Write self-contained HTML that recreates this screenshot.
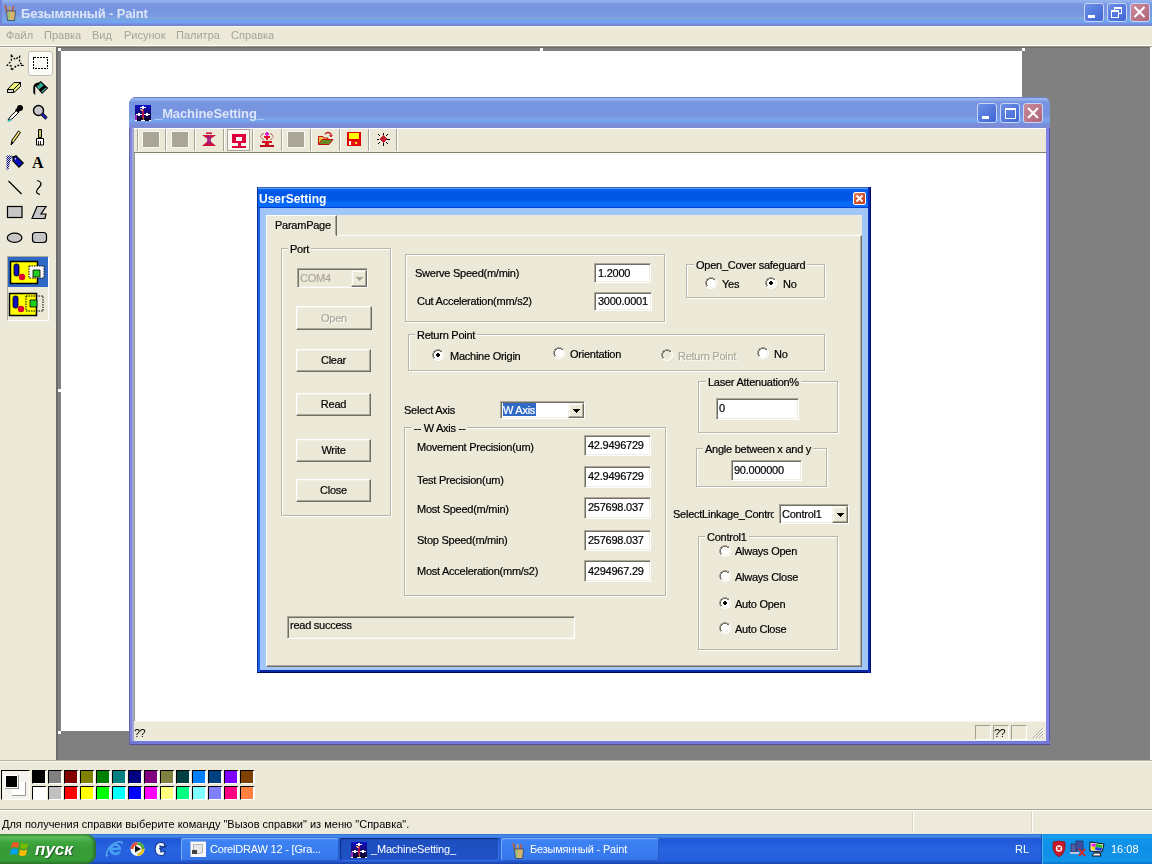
<!DOCTYPE html>
<html><head><meta charset="utf-8">
<style>
*{margin:0;padding:0;box-sizing:border-box}
html,body{width:1152px;height:864px;overflow:hidden;background:#ECE9D8;font-family:"Liberation Sans",sans-serif;font-size:11px;color:#000}
.a{position:absolute}
.t{position:absolute;white-space:pre;line-height:1}
/* paint */
#ptitle{left:0;top:0;width:1152px;height:26px;background:linear-gradient(#95B2EE 0,#90AEEC 2px,#7A97E1 4px,#7794E0 10px,#7B98E3 16px,#80A0E6 17px,#78A8D8 19px,#70A4F4 21px,#72A2F0 23px,#7888D8 24px,#7484D4 26px)}
.wb{position:absolute;width:21px;height:21px;border:1px solid #C9D6F6;border-radius:3px;background:linear-gradient(135deg,#6C8FE4,#3F66D6)}
.wbx{background:linear-gradient(135deg,#C98A9C,#B26478)}
#menu{left:0;top:26px;width:1152px;height:21px;background:#ECE9D8;border-top:1px solid #F2F4EC;border-bottom:1px solid #9A9888;box-shadow:inset 0 -1px 0 #fff}
.mi{color:#A7A49A;top:30px}
#tools{left:0;top:47px;width:56px;height:713px;background:#ECE9D8;border-top:1px solid #F8F8F0}
#gray{left:56px;top:47px;width:1094px;height:713px;background:#808080;border-left:2px solid #6A6E68;border-top:1px solid #6E6E66}
#canvas{left:61px;top:51px;width:961px;height:680px;background:#fff}
#rstrip{left:1150px;top:47px;width:2px;height:713px;background:#fff}
#palette{left:0;top:760px;width:1152px;height:50px;background:#ECE9D8;border-top:1px solid #B5B2A2;box-shadow:inset 0 1px 0 #FAF9F2}
#pstatus{left:0;top:809px;width:1152px;height:25px;background:#EDEADC;border-top:1px solid #ACA899;box-shadow:inset 0 1px 0 #fff}
#taskbar{left:0;top:834px;width:1152px;height:30px;background:linear-gradient(#3168D5 0,#4993E6 2px,#2157D7 5px,#2663E0 50%,#245DDB 90%,#1941A5 100%)}
.sw{width:15px;height:14px;border-left:1px solid #000;border-top:1px solid #000;border-right:2px solid #fff;border-bottom:1px solid #fff}
.spn{width:16px;height:15px;border-left:1px solid #A3A08F;border-top:1px solid #A3A08F;border-right:1px solid #fff;border-bottom:1px solid #fff}
.tbg{width:16px;height:15px;background:#A9A597;outline:1px solid #F8F7F2}
.tbtn{height:23px;border-radius:3px;background:linear-gradient(#5A92F2 0,#3C81F3 3px,#3A7DF0 50%,#3576EC 100%);box-shadow:inset 1px 1px 0 #78ACF8,inset -1px -1px 0 #2A5CC8}
.tbact{background:linear-gradient(#1A44B0,#1E4FC0 3px,#1E52C6);box-shadow:inset 1px 1px 1px #0F2F80,inset -1px -1px 0 #3870E0}
.tbt{color:#fff;letter-spacing:-0.2px}
.d{letter-spacing:-0.25px}
.hd{width:3px;height:3px;background:#fff}
.t{will-change:transform}
.d{-webkit-text-stroke-width:0.2px}
</style></head><body>

<!-- Paint title -->
<div id="ptitle" class="a"></div>

<svg class="a" style="left:2px;top:2px" width="17" height="19" viewBox="0 0 17 19" shape-rendering="auto">
 <path d="M3 3 L5 10" stroke="#B86040" stroke-width="1.6"/>
 <path d="M7.5 4 L8 10" stroke="#E0A050" stroke-width="1.6"/>
 <path d="M11.5 4 L10.5 10" stroke="#C86040" stroke-width="1.6"/>
 <path d="M4.5 9 L13.5 9 L12.5 18.5 L5.5 18.5 Z" fill="#C8C890" stroke="#404050" stroke-width="0.9" opacity="0.9"/>
 <path d="M5.5 10 L8 10 L8 17.5 L6.2 17.5 Z" fill="#90C070" opacity="0.8"/>
 <path d="M8 10 L12.5 10 L11.8 17.5 L8 17.5 Z" fill="#E0B060" opacity="0.8"/>
</svg>
<div class="a" style="left:0;top:0;width:2px;height:25px;background:#6F86D8"></div>
<div class="t" style="left:21px;top:7px;font-size:13px;font-weight:bold;color:#DCE6FA;letter-spacing:-0.15px">Безымянный - Paint</div>
<div class="wb" style="left:1084px;top:3px;width:20px;height:19px"></div>
<div class="wb" style="left:1107px;top:3px;width:20px;height:19px"></div>
<div class="wb wbx" style="left:1130px;top:3px;width:20px;height:19px"></div>
<svg class="a" style="left:1080px;top:0" width="72" height="25" shape-rendering="crispEdges">
 <rect x="8" y="15" width="7" height="3" fill="#fff"/>
 <path d="M34 7h7v6h-7z" fill="none" stroke="#fff" stroke-width="1"/><rect x="33.5" y="7" width="8" height="2" fill="#fff"/>
 <rect x="31" y="10.5" width="7.5" height="6.5" fill="#5577DD" stroke="#fff" stroke-width="1"/><rect x="30.5" y="10" width="8.5" height="2" fill="#fff"/>
 <path d="M54.5 7 L64.5 17 M64.5 7 L54.5 17" stroke="#fff" stroke-width="2" shape-rendering="auto"/>
</svg>


<div id="menu" class="a"></div>
<div class="t mi" style="left:6px">Файл</div>
<div class="t mi" style="left:44px">Правка</div>
<div class="t mi" style="left:92px">Вид</div>
<div class="t mi" style="left:124px">Рисунок</div>
<div class="t mi" style="left:176px">Палитра</div>
<div class="t mi" style="left:231px">Справка</div>

<div id="tools" class="a"></div>
<div id="gray" class="a"></div>
<div id="canvas" class="a"></div>
<div id="rstrip" class="a"></div>
<div class="a hd" style="left:58px;top:48px"></div>
<div class="a hd" style="left:540px;top:48px"></div>
<div class="a hd" style="left:1022px;top:48px"></div>
<div class="a hd" style="left:58px;top:389px"></div>
<div class="a hd" style="left:58px;top:731px"></div>


<!-- toolbox -->
<div class="a" style="left:28px;top:51px;width:25px;height:25px;background:#FBFBF8;border:1px solid #C1BFB2;border-radius:3px;box-shadow:inset 1px 1px 0 #fff"></div>
<svg class="a" style="left:0;top:47px" width="56" height="200" viewBox="0 47 56 200" shape-rendering="crispEdges"><defs><pattern id="chk" x="0" y="0" width="2" height="2" patternUnits="userSpaceOnUse"><rect width="1" height="1" fill="#000080"/><rect x="1" y="1" width="1" height="1" fill="#000080"/><rect x="1" y="0" width="1" height="1" fill="#C8D0F8"/></pattern></defs>
 <!-- free select star -->
 <g fill="none" stroke="#000" stroke-width="1" stroke-dasharray="2 1.5" shape-rendering="auto">
  <path d="M11.4 55.3 L15.2 59.4 L19.6 56.4 L19.5 62 L22.7 65.3 L16.6 65.5 L11.4 70.4 L11.4 66 L7.3 65.3 L11.4 60.5 Z" stroke-width="1.3"/>
 </g>
 <!-- rect select -->
 <rect x="33.5" y="57.5" width="14" height="11" fill="none" stroke="#000" stroke-dasharray="2 1"/>
 <!-- eraser -->
 <g shape-rendering="auto">
 <path d="M7.5 89.5 L14 82.5 L20.5 82.5 L20.5 86.5 L14 92.5 L7.5 92.5 Z" fill="#EEF078" stroke="#000"/>
 <path d="M7.5 89.5 L13.5 89.5 L13.5 92.5 L7.5 92.5 Z" fill="#D4D2CC" stroke="#000"/>
 <path d="M13.5 89.5 L20.5 82.5" stroke="#000" fill="none"/>
 <!-- fill bucket -->
 <path d="M40.7 81 L48.2 88 L42 94 L35 85.5 Z" fill="#000"/>
 <path d="M40.6 82.6 L43.8 85.6 L38.6 89.6 L36.6 85.6 Z" fill="#2EB09C"/>
 <path d="M46.6 88.3 L42 92.6 L41.2 91.8 L45.8 87.5 Z" fill="#48C8B0"/>
 <path d="M39 82.5 Q34.5 82.5 33.3 86.5 L33.3 93 L35.2 95 L35.2 87 Q36 85.2 39.5 85 Z" fill="#000"/>
 <!-- dropper -->
 <path d="M8 120 L10 117 L17 110 L19 112 L12 119 Z" fill="#fff" stroke="#000" stroke-width="1"/>
 <path d="M7 121 L10 119 L12 120 L9 122 Z" fill="#2FC4B8"/>
 <circle cx="20" cy="108" r="3" fill="#000"/>
 <path d="M15 110 L18 113 L20 111 L17 108 Z" fill="#000"/>
 <!-- magnifier -->
 <circle cx="38.5" cy="110.5" r="5" fill="#C8C8CC" stroke="#000" stroke-width="1.4"/>
 <path d="M42 114 L46.5 118.5" stroke="#000" stroke-width="3.2"/>
 <path d="M42 114 L46.5 118.5" stroke="#2020C0" stroke-width="1.8"/>
 <!-- pencil -->
 <path d="M11 145 L12 140 L18.5 131 L20.5 132.5 L14 141.5 Z" fill="#F0E070" stroke="#000"/>
 <path d="M11 145 L12 141.5 L13.5 142.5 Z" fill="#000"/>
 <!-- brush -->
 <path d="M38.5 129.5 h3 v8 h-3 z" fill="#C8C050" stroke="#000" stroke-width="1"/>
 <path d="M36.5 138.5 h7 v6.5 h-7 z" fill="#fff" stroke="#000" stroke-width="1"/>
 <path d="M38.5 141 v4 M40.5 141 v4" stroke="#000" stroke-width="0.9"/>
 <!-- airbrush -->
 <path d="M6.5 155.5 L12.5 155.5 L10 162 L8.5 169.5 L6.5 169.5 Z" fill="url(#chk)"/>
 <path d="M13 157.5 L16 155.8 L23.2 163 L19 167.2 L13 161 Z" fill="#0A10C0" stroke="#000" stroke-width="1.2"/>
 <path d="M14.6 158.6 L16.2 157.4 L15.2 160.2 Z" fill="#fff"/>
 <path d="M12 156.5 L14.5 157" stroke="#000" stroke-width="1"/>
 </g>
 <!-- A -->
 <text x="32" y="168" font-family="Liberation Serif" font-weight="bold" font-size="16" fill="#000">A</text>
 <g shape-rendering="auto">
 <!-- line -->
 <path d="M8.5 181 L21.5 194" stroke="#000" stroke-width="1.2"/>
 <!-- curve -->
 <path d="M37 180.5 C41 181 42.5 184 39 187.5 C35.5 190.5 35.5 193.5 40 194.5" fill="none" stroke="#000" stroke-width="1.2"/>
 <!-- rect -->
 <rect x="7.5" y="206.5" width="14.5" height="11" fill="#C6C6C6" stroke="#000" stroke-width="1.2"/>
 <!-- polygon -->
 <path d="M37 206.5 L46 206.5 L41 214 L46 214 L45 218.5 L32 218.5 Z" fill="#C6C6C6" stroke="#000" stroke-width="1.2"/>
 <!-- ellipse -->
 <ellipse cx="14.6" cy="237.8" rx="7.3" ry="4.6" fill="#C6C6C6" stroke="#000" stroke-width="1.2"/>
 <!-- rounded rect -->
 <rect x="32.5" y="232.5" width="14" height="10" rx="3" fill="#C6C6C6" stroke="#000" stroke-width="1.2"/>
 </g>
</svg>
<!-- options box -->
<div class="a" style="left:7px;top:256px;width:42px;height:65px;border:1px solid;border-color:#ACA899 #fff #fff #ACA899;background:#ECE9D8"></div>
<div class="a" style="left:8px;top:257px;width:40px;height:30px;background:#316AC5"></div>
<svg class="a" style="left:8px;top:257px" width="42" height="64" viewBox="0 0 42 64" shape-rendering="auto">
 <g transform="translate(2,4)">
  <rect x="0.5" y="0.5" width="27" height="22" fill="#FFFF00" stroke="#000" stroke-width="1.5"/>
  <rect x="19" y="5" width="15" height="12" fill="#fff" stroke="#000" stroke-dasharray="1.5 1"/>
  <rect x="4" y="3" width="5" height="12" rx="2" fill="#1010C0" stroke="#000" stroke-width="0.8"/>
  <circle cx="12" cy="16" r="3.2" fill="#E00030"/>
  <path d="M23 9 L30 9 L30 16 L23 16 Z" fill="#20D020" stroke="#000" stroke-width="0.8"/>
 </g>
 <g transform="translate(1,36)">
  <rect x="0.5" y="0.5" width="27" height="22" fill="#FFFF00" stroke="#000" stroke-width="1.5"/>
  <rect x="17" y="3" width="17" height="15" fill="none" stroke="#000" stroke-dasharray="1.5 1"/>
  <rect x="4" y="3" width="5" height="12" rx="2" fill="#1010C0" stroke="#000" stroke-width="0.8"/>
  <circle cx="12" cy="16" r="3.2" fill="#E00030"/>
  <path d="M21 7 L28 7 L28 14 L21 14 Z" fill="#20D020" stroke="#000" stroke-width="0.8"/>
 </g>
</svg>

<div id="palette" class="a"></div>

<!-- palette -->
<div class="a" style="left:1px;top:770px;width:29px;height:30px;background:#F4F3EC;border-left:1px solid #000;border-top:1px solid #000;border-right:1px solid #fff;border-bottom:1px solid #fff"></div>
<div class="a" style="left:12px;top:782px;width:14px;height:14px;background:#fff;border-right:1px solid #9A9890;border-bottom:1px solid #9A9890"></div>
<div class="a" style="left:5px;top:775px;width:14px;height:14px;background:#fff;border-right:1px solid #9A9890;border-bottom:1px solid #9A9890;padding:1px"><div style="width:11px;height:11px;background:#000"></div></div>
<div class="a sw" style="left:32px;top:770px;background:#000000"></div><div class="a sw" style="left:32px;top:786px;background:#FFFFFF"></div><div class="a sw" style="left:48px;top:770px;background:#808080"></div><div class="a sw" style="left:48px;top:786px;background:#C0C0C0"></div><div class="a sw" style="left:64px;top:770px;background:#800000"></div><div class="a sw" style="left:64px;top:786px;background:#FF0000"></div><div class="a sw" style="left:80px;top:770px;background:#808000"></div><div class="a sw" style="left:80px;top:786px;background:#FFFF00"></div><div class="a sw" style="left:96px;top:770px;background:#008000"></div><div class="a sw" style="left:96px;top:786px;background:#00FF00"></div><div class="a sw" style="left:112px;top:770px;background:#008080"></div><div class="a sw" style="left:112px;top:786px;background:#00FFFF"></div><div class="a sw" style="left:128px;top:770px;background:#000080"></div><div class="a sw" style="left:128px;top:786px;background:#0000FF"></div><div class="a sw" style="left:144px;top:770px;background:#800080"></div><div class="a sw" style="left:144px;top:786px;background:#FF00FF"></div><div class="a sw" style="left:160px;top:770px;background:#808040"></div><div class="a sw" style="left:160px;top:786px;background:#FFFF80"></div><div class="a sw" style="left:176px;top:770px;background:#004040"></div><div class="a sw" style="left:176px;top:786px;background:#00FF80"></div><div class="a sw" style="left:192px;top:770px;background:#0080FF"></div><div class="a sw" style="left:192px;top:786px;background:#80FFFF"></div><div class="a sw" style="left:208px;top:770px;background:#004080"></div><div class="a sw" style="left:208px;top:786px;background:#8080FF"></div><div class="a sw" style="left:224px;top:770px;background:#8000FF"></div><div class="a sw" style="left:224px;top:786px;background:#FF0080"></div><div class="a sw" style="left:240px;top:770px;background:#804000"></div><div class="a sw" style="left:240px;top:786px;background:#FF8040"></div>


<!-- MachineSetting window -->
<div class="a" style="left:129px;top:97px;width:921px;height:648px;background:#7478DA;border-radius:7px 7px 0 0"></div>
<div class="a" style="left:129px;top:97px;width:921px;height:31px;border-radius:7px 7px 0 0;background:linear-gradient(#6A80C8 0,#6A80C8 1px,#98B4EE 1px,#90ACEB 3px,#7794E0 5px,#7794E0 18px,#7A9CE4 21px,#78A8F0 23px,#74A0EC 25px,#7C8CD8 27px,#7C8CD8 31px)"></div>
<div class="a" style="left:129px;top:128px;width:5px;height:617px;background:linear-gradient(90deg,#5A68A8 0,#5A68A8 1px,#8286E0 1px,#8286E0 3px,#A0A8D0 3px)"></div>
<div class="a" style="left:1046px;top:128px;width:4px;height:617px;background:linear-gradient(90deg,#8282E8 0,#8282E8 3px,#5454A8 3px)"></div>
<div class="a" style="left:129px;top:741px;width:921px;height:4px;background:linear-gradient(#7478D8 0,#7478D8 3px,#50509A 3px)"></div><div class="a" style="left:129px;top:727px;width:1px;height:18px;background:#5A68A8"></div>
<svg class="a" style="left:135px;top:105px" width="16" height="16" viewBox="0 0 16 16" shape-rendering="crispEdges">
 <defs><linearGradient id="mg" x1="0" y1="0" x2="0" y2="1"><stop offset="0" stop-color="#1212C8"/><stop offset="0.55" stop-color="#140A70"/><stop offset="1" stop-color="#0A0020"/></linearGradient></defs>
 <rect width="16" height="16" fill="url(#mg)"/>
 <rect x="7" y="4" width="2" height="9" fill="#B01050"/>
 <rect x="8" y="12" width="1" height="3" fill="#C07020"/>
 <rect x="5" y="4" width="2" height="1" fill="#E0B060"/><rect x="6" y="5" width="2" height="1" fill="#E0C070"/>
 <rect x="0" y="10" width="2" height="5" fill="#A020C0"/>
 <path d="M5 2h6v1h-6zM7 1h2v3h-2z" fill="#fff"/>
 <path d="M1 9h6v1h-6zM3 8h2v3h-2z" fill="#fff"/>
 <path d="M9 9h6v1h-6zM11 8h2v3h-2z" fill="#fff"/>
 <path d="M0 15h2v1h-2zM6 15h4v1h-4zM14 15h2v1h-2z" fill="#fff"/>
</svg>
<div class="t" style="left:155px;top:107px;font-size:13px;font-weight:bold;color:#DCE6FA;letter-spacing:-0.1px">_MachineSetting_</div>
<div class="wb" style="left:977px;top:103px;width:20px;height:20px"></div>
<div class="wb" style="left:1000px;top:103px;width:20px;height:20px"></div>
<div class="wb wbx" style="left:1023px;top:103px;width:20px;height:20px"></div>
<svg class="a" style="left:975px;top:100px" width="70" height="26" shape-rendering="crispEdges">
 <rect x="7" y="16" width="7" height="3" fill="#fff"/>
 <rect x="30.5" y="8.5" width="10" height="10" fill="none" stroke="#fff" stroke-width="1"/><rect x="30" y="8" width="11" height="2" fill="#fff"/>
 <path d="M53 8 L63 18 M63 8 L53 18" stroke="#fff" stroke-width="2" shape-rendering="auto"/>
</svg>

<!-- toolbar -->
<div class="a" style="left:134px;top:128px;width:912px;height:25px;background:#ECE9D8;border-top:1px solid #fff;border-bottom:1px solid #85826F"></div>
<div class="a" style="left:134px;top:153px;width:912px;height:568px;background:#fff;border-left:1px solid #9D9A8A"></div>

<!-- toolbar buttons -->
<div class="a" style="left:137px;top:129px;width:2px;height:22px;border-left:1px solid #A7A594;border-right:1px solid #fff"></div><div class="a" style="left:165px;top:129px;width:2px;height:22px;border-left:1px solid #A7A594;border-right:1px solid #fff"></div><div class="a" style="left:194px;top:129px;width:2px;height:22px;border-left:1px solid #A7A594;border-right:1px solid #fff"></div><div class="a" style="left:223px;top:129px;width:2px;height:22px;border-left:1px solid #A7A594;border-right:1px solid #fff"></div><div class="a" style="left:252px;top:129px;width:2px;height:22px;border-left:1px solid #A7A594;border-right:1px solid #fff"></div><div class="a" style="left:281px;top:129px;width:2px;height:22px;border-left:1px solid #A7A594;border-right:1px solid #fff"></div><div class="a" style="left:310px;top:129px;width:2px;height:22px;border-left:1px solid #A7A594;border-right:1px solid #fff"></div><div class="a" style="left:339px;top:129px;width:2px;height:22px;border-left:1px solid #A7A594;border-right:1px solid #fff"></div><div class="a" style="left:368px;top:129px;width:2px;height:22px;border-left:1px solid #A7A594;border-right:1px solid #fff"></div><div class="a" style="left:396px;top:129px;width:2px;height:22px;border-left:1px solid #A7A594;border-right:1px solid #fff"></div>
<div class="a" style="left:227px;top:129px;width:23px;height:22px;background:#F7F6F1;border:1px solid #A9A697"></div>
<div class="a tbg" style="left:143px;top:132px"></div>
<div class="a tbg" style="left:172px;top:132px"></div>
<div class="a tbg" style="left:288px;top:132px"></div>
<svg class="a" style="left:0;top:0" width="400" height="160" viewBox="0 0 400 160">
 <!-- bowtie -->
 <g shape-rendering="auto">
 <rect x="206" y="132.5" width="6" height="1.5" fill="#C0103A"/>
 <path d="M202 135 L216 135 L209 140 Z" fill="#D0103A"/>
 <path d="M202 146 L216 146 L209 140 Z" fill="#D0103A"/>
 <path d="M207 136 L211 136 L211 144 L207 144 Z" fill="#9A2080" opacity="0.8"/>
 </g>
 <g shape-rendering="crispEdges">
 <!-- monitor -->
 <path d="M232 134 H246 V143 H232 Z M236 137 V141 H242 V137 Z" fill="#E0003A" fill-rule="evenodd"/>
 <rect x="238" y="143" width="3" height="3" fill="#E0003A"/>
 <rect x="232" y="146" width="14" height="2" fill="#E0003A"/>
 <!-- person arrows -->
 <rect x="265" y="133" width="4" height="1.5" fill="#E020D8"/>
 <rect x="266" y="132" width="2" height="4" fill="#E020D8"/>
 <rect x="264" y="136" width="6" height="2" fill="#E0102A"/>
 <rect x="266" y="136" width="2" height="4" fill="#D8102A"/>
 <rect x="262" y="141" width="10" height="2" fill="#D01020"/>
 <rect x="265" y="141" width="4" height="5" fill="#E01020"/>
 <rect x="260" y="145" width="14" height="2" fill="#C00818"/>
 <path d="M263.5 133 L260.5 136.5 L264 140.5 M270.5 133 L273.5 136.5 L270 140.5" stroke="#901010" stroke-width="1" fill="none" stroke-dasharray="1 0.6" shape-rendering="auto"/>
 <!-- folder -->
 </g>
 <g shape-rendering="auto">
 <path d="M318.5 136.5 L323 136.5 L324 138 L328 138 L328 144.5 L318.5 144.5 Z" fill="#F0C040" stroke="#C01010"/>
 <path d="M318.5 144.5 L322 139.5 L333 139.5 L329 144.5 Z" fill="#6A8A20" stroke="#C01010"/>
 <path d="M325 134 Q328 131 331 134 L331 136" fill="none" stroke="#C01010" stroke-width="1.2"/>
 <path d="M329.5 135 L331 137 L332.5 135" fill="none" stroke="#C01010" stroke-width="1"/>
 </g>
 <g shape-rendering="crispEdges">
 <!-- floppy -->
 <rect x="347" y="132" width="14" height="14" fill="#E00000"/>
 <rect x="349" y="133" width="10" height="6" fill="#FFFF00"/>
 <rect x="349" y="141" width="10" height="4" fill="#F01010"/>
 <rect x="349" y="141" width="2" height="4" fill="#fff"/>
 <rect x="355" y="142" width="2" height="2" fill="#F0E040"/>
 <!-- star -->
 <path d="M383 135 L387 139 L383 143 L379 139 Z" fill="#C02030"/>
 <path d="M383 133 V135 M383 143 V146 M377 139 H379 M387 139 H390 M378 134 L380 136 M388 134 L386 136 M378 144 L380 142 M388 144 L386 142" stroke="#000" stroke-width="1"/>
 </g>
</svg>

<!-- status -->
<div class="a" style="left:134px;top:721px;width:912px;height:20px;background:#ECE9D8;border-top:1px solid #F6F5EE;border-bottom:1px solid #E8F0F8"></div>
<div class="t" style="left:134px;top:728px;letter-spacing:-0.5px">??</div>
<div class="a spn" style="left:975px;top:725px"></div>
<div class="a spn" style="left:993px;top:725px"></div>
<div class="t" style="left:994px;top:728px;letter-spacing:-0.5px">??</div>
<div class="a spn" style="left:1011px;top:725px"></div>
<svg class="a" style="left:1031px;top:726px" width="14" height="14" shape-rendering="crispEdges">
 <path d="M12 2 L2 12 M12 5 L5 12 M12 8 L8 12 M12 11 L11 12" stroke="#A8A594" stroke-width="1"/>
 <path d="M13 2 L3 12 M13 5 L6 12 M13 8 L9 12" stroke="#fff" stroke-width="1"/>
</svg>

<!--DLG-->
<div class="a" style="left:257px;top:187px;width:614px;height:486px;background:#0828A8"></div>
<div class="a" style="left:257px;top:187px;width:1px;height:486px;background:#0B2E9E"></div>
<div class="a" style="left:258px;top:187px;width:2px;height:485px;background:#1C5FE0"></div>
<div class="a" style="left:870px;top:187px;width:1px;height:486px;background:#000860"></div>
<div class="a" style="left:257px;top:672px;width:614px;height:1px;background:#000860"></div>
<div class="a" style="left:260px;top:208px;width:608px;height:462px;background:#A0C7F7"></div>
<div class="a" style="left:258px;top:187px;width:613px;height:21px;background:linear-gradient(#3A64B0 0,#3A64B0 1px,#5C9CF8 1px,#5C9CF8 2px,#0A62F0 2px,#0058E8 5px,#0058E6 13px,#0A6AF8 15px,#0A6AF8 20px,#0040D0 20px)"></div>
<div class="a" style="left:257px;top:187px;width:1px;height:21px;background:#0B2E9E"></div>
<div class="a" style="left:868px;top:187px;width:2px;height:486px;background:#0A30B8"></div>
<div class="a" style="left:870px;top:187px;width:1px;height:486px;background:#000860"></div>
<div class="t" style="left:259px;top:193px;font-size:12px;font-weight:bold;color:#fff">UserSetting</div>
<div class="a" style="left:853px;top:192px;width:13px;height:13px;border:1px solid #fff;border-radius:2px;background:linear-gradient(135deg,#E8906A,#D0502A 50%,#C0402A)"></div>
<svg class="a" style="left:855px;top:194px" width="9" height="9" shape-rendering="auto"><path d="M1.5 1.5 L7.5 7.5 M7.5 1.5 L1.5 7.5" stroke="#fff" stroke-width="2"/></svg>
<div class="a" style="left:266px;top:215px;width:596px;height:452px;background:#ECE9D8"></div>
<div class="a" style="left:266px;top:235px;width:596px;height:432px;border-top:1px solid #fff;border-left:1px solid #fff;border-right:1px solid #716F64;border-bottom:1px solid #716F64;box-shadow:inset -1px -1px 0 #ACA899"></div>
<div class="a" style="left:266px;top:215px;width:71px;height:21px;background:#ECE9D8;border-top:1px solid #fff;border-left:1px solid #fff;border-right:1px solid #716F64;box-shadow:inset -1px 0 0 #ACA899"></div>
<div class="a" style="left:267px;top:235px;width:69px;height:1px;background:#ECE9D8"></div>
<div class="t d" style="left:275px;top:220px;">ParamPage</div>
<div class="a" style="left:282px;top:249px;width:110px;height:268px;border:1px solid #fff"></div>
<div class="a" style="left:281px;top:248px;width:110px;height:268px;border:1px solid #B8B5A6"></div>
<div class="t d" style="left:288px;top:244px;padding:0 2px 0 2px;background:#ECE9D8;height:11px">Port</div>
<div class="a" style="left:297px;top:268px;width:71px;height:20px;background:#ECE9D8;border-top:1px solid #ACA899;border-left:1px solid #ACA899;border-right:1px solid #fff;border-bottom:1px solid #fff;box-shadow:inset 1px 1px 0 #716F64,inset -1px -1px 0 #F1EFE2"></div>
<div class="a" style="left:351px;top:270px;width:16px;height:17px;background:#ECE9D8;border-top:1px solid #F1EFE2;border-left:1px solid #F1EFE2;border-right:1px solid #716F64;border-bottom:1px solid #716F64;box-shadow:inset -1px -1px 0 #ACA899,inset 1px 1px 0 #fff"></div>
<svg class="a" style="left:356px;top:277px" width="7" height="4" shape-rendering="crispEdges"><path d="M0 0h7v1h-1v1h-1v1h-1v1h-1v-1h-1v-1h-1v-1h-1z" fill="#ACA899"/><path d="M1 1h7v1h-1v1h-1v1h-1" fill="#fff" opacity="0"/></svg>
<div class="t d" style="left:300px;top:273px;color:#ACA899">COM4</div>
<div class="a" style="left:296px;top:306px;width:76px;height:24px;background:#ECE9D8;border-top:1px solid #fff;border-left:1px solid #fff;border-right:1px solid #716F64;border-bottom:1px solid #716F64;box-shadow:inset -1px -1px 0 #ACA899,inset 1px 1px 0 #F1EFE2"></div>
<div class="t d" style="left:296px;width:76px;text-align:center;top:313px;color:#ACA899;text-shadow:1px 1px 0 #fff">Open</div>
<div class="a" style="left:296px;top:349px;width:75px;height:23px;background:#ECE9D8;border-top:1px solid #fff;border-left:1px solid #fff;border-right:1px solid #716F64;border-bottom:1px solid #716F64;box-shadow:inset -1px -1px 0 #ACA899,inset 1px 1px 0 #F1EFE2"></div>
<div class="t d" style="left:296px;width:75px;text-align:center;top:355px;">Clear</div>
<div class="a" style="left:296px;top:393px;width:75px;height:23px;background:#ECE9D8;border-top:1px solid #fff;border-left:1px solid #fff;border-right:1px solid #716F64;border-bottom:1px solid #716F64;box-shadow:inset -1px -1px 0 #ACA899,inset 1px 1px 0 #F1EFE2"></div>
<div class="t d" style="left:296px;width:75px;text-align:center;top:399px;">Read</div>
<div class="a" style="left:296px;top:439px;width:75px;height:23px;background:#ECE9D8;border-top:1px solid #fff;border-left:1px solid #fff;border-right:1px solid #716F64;border-bottom:1px solid #716F64;box-shadow:inset -1px -1px 0 #ACA899,inset 1px 1px 0 #F1EFE2"></div>
<div class="t d" style="left:296px;width:75px;text-align:center;top:445px;">Write</div>
<div class="a" style="left:296px;top:479px;width:75px;height:23px;background:#ECE9D8;border-top:1px solid #fff;border-left:1px solid #fff;border-right:1px solid #716F64;border-bottom:1px solid #716F64;box-shadow:inset -1px -1px 0 #ACA899,inset 1px 1px 0 #F1EFE2"></div>
<div class="t d" style="left:296px;width:75px;text-align:center;top:485px;">Close</div>
<div class="a" style="left:406px;top:255px;width:260px;height:68px;border:1px solid #fff"></div>
<div class="a" style="left:405px;top:254px;width:260px;height:68px;border:1px solid #B8B5A6"></div>
<div class="t d" style="left:415px;top:268px;">Swerve Speed(m/min)</div>
<div class="t d" style="left:417px;top:296px;">Cut Acceleration(mm/s2)</div>
<div class="a" style="left:594px;top:263px;width:57px;height:20px;background:#fff;border-top:1px solid #ACA899;border-left:1px solid #ACA899;border-right:1px solid #fff;border-bottom:1px solid #fff;box-shadow:inset 1px 1px 0 #716F64,inset -1px -1px 0 #F1EFE2"></div>
<div class="t d" style="left:598px;top:268px;color:#000">1.2000</div>
<div class="a" style="left:594px;top:292px;width:58px;height:19px;background:#fff;border-top:1px solid #ACA899;border-left:1px solid #ACA899;border-right:1px solid #fff;border-bottom:1px solid #fff;box-shadow:inset 1px 1px 0 #716F64,inset -1px -1px 0 #F1EFE2"></div>
<div class="t d" style="left:598px;top:296px;color:#000">3000.0001</div>
<div class="a" style="left:687px;top:265px;width:139px;height:34px;border:1px solid #fff"></div>
<div class="a" style="left:686px;top:264px;width:139px;height:34px;border:1px solid #B8B5A6"></div>
<div class="t d" style="left:694px;top:260px;padding:0 2px 0 2px;background:#ECE9D8;height:11px">Open_Cover safeguard</div>
<svg class="a" style="left:705px;top:277px" width="12" height="12" viewBox="0 0 12 12" shape-rendering="crispEdges"><path d="M4 0h4v1h2v1h1v2h1v4h-1v2h-1v1h-2v1h-4v-1h-2v-1h-1v-2h-1v-4h1v-2h1v-1h2z" fill="#fff"/><path d="M4 0h4v1h-4zM2 1h2v1h-2zM8 1h2v1h-2zM1 2h1v2h-1zM0 4h1v4h-1zM1 8h1v2h-1z" fill="#ACA899"/><path d="M4 1h4v1h-4zM2 2h2v1h-2zM8 2h2v1h-2zM2 3h1v1h-1zM1 4h1v4h-1zM2 8h1v1h-1z" fill="#716F64"/><path d="M10 2h1v2h-1zM11 4h1v4h-1zM10 8h1v2h-1zM8 10h2v1h-2zM2 10h2v1h-2zM4 11h4v1h-4z" fill="#fff"/><path d="M9 3h1v1h-1zM10 4h1v4h-1zM9 8h1v1h-1zM8 9h1v1h-1zM3 9h1v1h-1zM4 10h4v1h-4z" fill="#F1EFE2"/></svg>
<div class="t d" style="left:722px;top:279px;">Yes</div>
<svg class="a" style="left:765px;top:277px" width="12" height="12" viewBox="0 0 12 12" shape-rendering="crispEdges"><path d="M4 0h4v1h2v1h1v2h1v4h-1v2h-1v1h-2v1h-4v-1h-2v-1h-1v-2h-1v-4h1v-2h1v-1h2z" fill="#fff"/><path d="M4 0h4v1h-4zM2 1h2v1h-2zM8 1h2v1h-2zM1 2h1v2h-1zM0 4h1v4h-1zM1 8h1v2h-1z" fill="#ACA899"/><path d="M4 1h4v1h-4zM2 2h2v1h-2zM8 2h2v1h-2zM2 3h1v1h-1zM1 4h1v4h-1zM2 8h1v1h-1z" fill="#716F64"/><path d="M10 2h1v2h-1zM11 4h1v4h-1zM10 8h1v2h-1zM8 10h2v1h-2zM2 10h2v1h-2zM4 11h4v1h-4z" fill="#fff"/><path d="M9 3h1v1h-1zM10 4h1v4h-1zM9 8h1v1h-1zM8 9h1v1h-1zM3 9h1v1h-1zM4 10h4v1h-4z" fill="#F1EFE2"/><path d="M5 4h2v1h1v2h-1v1h-2v-1h-1v-2h1z" fill="#000"/></svg>
<div class="t d" style="left:783px;top:279px;">No</div>
<div class="a" style="left:409px;top:335px;width:417px;height:37px;border:1px solid #fff"></div>
<div class="a" style="left:408px;top:334px;width:417px;height:37px;border:1px solid #B8B5A6"></div>
<div class="t d" style="left:415px;top:330px;padding:0 2px 0 2px;background:#ECE9D8;height:11px">Return Point</div>
<svg class="a" style="left:432px;top:349px" width="12" height="12" viewBox="0 0 12 12" shape-rendering="crispEdges"><path d="M4 0h4v1h2v1h1v2h1v4h-1v2h-1v1h-2v1h-4v-1h-2v-1h-1v-2h-1v-4h1v-2h1v-1h2z" fill="#fff"/><path d="M4 0h4v1h-4zM2 1h2v1h-2zM8 1h2v1h-2zM1 2h1v2h-1zM0 4h1v4h-1zM1 8h1v2h-1z" fill="#ACA899"/><path d="M4 1h4v1h-4zM2 2h2v1h-2zM8 2h2v1h-2zM2 3h1v1h-1zM1 4h1v4h-1zM2 8h1v1h-1z" fill="#716F64"/><path d="M10 2h1v2h-1zM11 4h1v4h-1zM10 8h1v2h-1zM8 10h2v1h-2zM2 10h2v1h-2zM4 11h4v1h-4z" fill="#fff"/><path d="M9 3h1v1h-1zM10 4h1v4h-1zM9 8h1v1h-1zM8 9h1v1h-1zM3 9h1v1h-1zM4 10h4v1h-4z" fill="#F1EFE2"/><path d="M5 4h2v1h1v2h-1v1h-2v-1h-1v-2h1z" fill="#000"/></svg>
<div class="t d" style="left:450px;top:351px;">Machine Origin</div>
<svg class="a" style="left:553px;top:347px" width="12" height="12" viewBox="0 0 12 12" shape-rendering="crispEdges"><path d="M4 0h4v1h2v1h1v2h1v4h-1v2h-1v1h-2v1h-4v-1h-2v-1h-1v-2h-1v-4h1v-2h1v-1h2z" fill="#fff"/><path d="M4 0h4v1h-4zM2 1h2v1h-2zM8 1h2v1h-2zM1 2h1v2h-1zM0 4h1v4h-1zM1 8h1v2h-1z" fill="#ACA899"/><path d="M4 1h4v1h-4zM2 2h2v1h-2zM8 2h2v1h-2zM2 3h1v1h-1zM1 4h1v4h-1zM2 8h1v1h-1z" fill="#716F64"/><path d="M10 2h1v2h-1zM11 4h1v4h-1zM10 8h1v2h-1zM8 10h2v1h-2zM2 10h2v1h-2zM4 11h4v1h-4z" fill="#fff"/><path d="M9 3h1v1h-1zM10 4h1v4h-1zM9 8h1v1h-1zM8 9h1v1h-1zM3 9h1v1h-1zM4 10h4v1h-4z" fill="#F1EFE2"/></svg>
<div class="t d" style="left:570px;top:349px;">Orientation</div>
<svg class="a" style="left:661px;top:349px" width="12" height="12" viewBox="0 0 12 12" shape-rendering="crispEdges"><path d="M4 0h4v1h2v1h1v2h1v4h-1v2h-1v1h-2v1h-4v-1h-2v-1h-1v-2h-1v-4h1v-2h1v-1h2z" fill="#ECE9D8"/><path d="M4 0h4v1h-4zM2 1h2v1h-2zM8 1h2v1h-2zM1 2h1v2h-1zM0 4h1v4h-1zM1 8h1v2h-1z" fill="#ACA899"/><path d="M4 1h4v1h-4zM2 2h2v1h-2zM8 2h2v1h-2zM2 3h1v1h-1zM1 4h1v4h-1zM2 8h1v1h-1z" fill="#716F64"/><path d="M10 2h1v2h-1zM11 4h1v4h-1zM10 8h1v2h-1zM8 10h2v1h-2zM2 10h2v1h-2zM4 11h4v1h-4z" fill="#fff"/><path d="M9 3h1v1h-1zM10 4h1v4h-1zM9 8h1v1h-1zM8 9h1v1h-1zM3 9h1v1h-1zM4 10h4v1h-4z" fill="#F1EFE2"/></svg>
<div class="t d" style="left:678px;top:351px;color:#ACA899;text-shadow:1px 1px 0 #fff">Return Point</div>
<svg class="a" style="left:757px;top:347px" width="12" height="12" viewBox="0 0 12 12" shape-rendering="crispEdges"><path d="M4 0h4v1h2v1h1v2h1v4h-1v2h-1v1h-2v1h-4v-1h-2v-1h-1v-2h-1v-4h1v-2h1v-1h2z" fill="#fff"/><path d="M4 0h4v1h-4zM2 1h2v1h-2zM8 1h2v1h-2zM1 2h1v2h-1zM0 4h1v4h-1zM1 8h1v2h-1z" fill="#ACA899"/><path d="M4 1h4v1h-4zM2 2h2v1h-2zM8 2h2v1h-2zM2 3h1v1h-1zM1 4h1v4h-1zM2 8h1v1h-1z" fill="#716F64"/><path d="M10 2h1v2h-1zM11 4h1v4h-1zM10 8h1v2h-1zM8 10h2v1h-2zM2 10h2v1h-2zM4 11h4v1h-4z" fill="#fff"/><path d="M9 3h1v1h-1zM10 4h1v4h-1zM9 8h1v1h-1zM8 9h1v1h-1zM3 9h1v1h-1zM4 10h4v1h-4z" fill="#F1EFE2"/></svg>
<div class="t d" style="left:774px;top:349px;">No</div>
<div class="a" style="left:699px;top:382px;width:140px;height:52px;border:1px solid #fff"></div>
<div class="a" style="left:698px;top:381px;width:140px;height:52px;border:1px solid #B8B5A6"></div>
<div class="t d" style="left:706px;top:377px;padding:0 2px 0 2px;background:#ECE9D8;height:11px">Laser Attenuation%</div>
<div class="a" style="left:716px;top:398px;width:83px;height:22px;background:#fff;border-top:1px solid #ACA899;border-left:1px solid #ACA899;border-right:1px solid #fff;border-bottom:1px solid #fff;box-shadow:inset 1px 1px 0 #716F64,inset -1px -1px 0 #F1EFE2"></div>
<div class="t d" style="left:719px;top:403px;color:#000">0</div>
<div class="a" style="left:697px;top:449px;width:131px;height:39px;border:1px solid #fff"></div>
<div class="a" style="left:696px;top:448px;width:131px;height:39px;border:1px solid #B8B5A6"></div>
<div class="t d" style="left:703px;top:444px;padding:0 2px 0 2px;background:#ECE9D8;height:11px">Angle between x and y</div>
<div class="a" style="left:731px;top:460px;width:71px;height:21px;background:#fff;border-top:1px solid #ACA899;border-left:1px solid #ACA899;border-right:1px solid #fff;border-bottom:1px solid #fff;box-shadow:inset 1px 1px 0 #716F64,inset -1px -1px 0 #F1EFE2"></div>
<div class="t d" style="left:734px;top:465px;color:#000">90.000000</div>
<div class="t d" style="left:404px;top:405px;">Select Axis</div>
<div class="a" style="left:500px;top:401px;width:85px;height:18px;background:#fff;border-top:1px solid #ACA899;border-left:1px solid #ACA899;border-right:1px solid #fff;border-bottom:1px solid #fff;box-shadow:inset 1px 1px 0 #716F64,inset -1px -1px 0 #F1EFE2"></div>
<div class="a" style="left:568px;top:403px;width:16px;height:15px;background:#ECE9D8;border-top:1px solid #F1EFE2;border-left:1px solid #F1EFE2;border-right:1px solid #716F64;border-bottom:1px solid #716F64;box-shadow:inset -1px -1px 0 #ACA899,inset 1px 1px 0 #fff"></div>
<svg class="a" style="left:573px;top:409px" width="7" height="4" shape-rendering="crispEdges"><path d="M0 0h7v1h-1v1h-1v1h-1v1h-1v-1h-1v-1h-1v-1h-1z" fill="#000"/></svg>
<div class="a" style="left:503px;top:403px;width:33px;height:13px;background:#316AC5"></div>
<div class="t d" style="left:503px;top:405px;color:#fff">W Axis</div>
<div class="a" style="left:405px;top:428px;width:262px;height:169px;border:1px solid #fff"></div>
<div class="a" style="left:404px;top:427px;width:262px;height:169px;border:1px solid #B8B5A6"></div>
<div class="t d" style="left:412px;top:423px;padding:0 2px 0 2px;background:#ECE9D8;height:11px">-- W Axis --</div>
<div class="t d" style="left:417px;top:442px;">Movement Precision(um)</div>
<div class="a" style="left:584px;top:435px;width:67px;height:21px;background:#fff;border-top:1px solid #ACA899;border-left:1px solid #ACA899;border-right:1px solid #fff;border-bottom:1px solid #fff;box-shadow:inset 1px 1px 0 #716F64,inset -1px -1px 0 #F1EFE2"></div>
<div class="t d" style="left:588px;top:440px;color:#000">42.9496729</div>
<div class="t d" style="left:417px;top:475px;">Test Precision(um)</div>
<div class="a" style="left:584px;top:466px;width:67px;height:22px;background:#fff;border-top:1px solid #ACA899;border-left:1px solid #ACA899;border-right:1px solid #fff;border-bottom:1px solid #fff;box-shadow:inset 1px 1px 0 #716F64,inset -1px -1px 0 #F1EFE2"></div>
<div class="t d" style="left:588px;top:471px;color:#000">42.9496729</div>
<div class="t d" style="left:417px;top:504px;">Most Speed(m/min)</div>
<div class="a" style="left:584px;top:497px;width:67px;height:22px;background:#fff;border-top:1px solid #ACA899;border-left:1px solid #ACA899;border-right:1px solid #fff;border-bottom:1px solid #fff;box-shadow:inset 1px 1px 0 #716F64,inset -1px -1px 0 #F1EFE2"></div>
<div class="t d" style="left:588px;top:502px;color:#000">257698.037</div>
<div class="t d" style="left:417px;top:535px;">Stop Speed(m/min)</div>
<div class="a" style="left:584px;top:530px;width:67px;height:21px;background:#fff;border-top:1px solid #ACA899;border-left:1px solid #ACA899;border-right:1px solid #fff;border-bottom:1px solid #fff;box-shadow:inset 1px 1px 0 #716F64,inset -1px -1px 0 #F1EFE2"></div>
<div class="t d" style="left:588px;top:535px;color:#000">257698.037</div>
<div class="t d" style="left:417px;top:566px;">Most Acceleration(mm/s2)</div>
<div class="a" style="left:584px;top:560px;width:67px;height:22px;background:#fff;border-top:1px solid #ACA899;border-left:1px solid #ACA899;border-right:1px solid #fff;border-bottom:1px solid #fff;box-shadow:inset 1px 1px 0 #716F64,inset -1px -1px 0 #F1EFE2"></div>
<div class="t d" style="left:588px;top:566px;color:#000">4294967.29</div>
<div class="t d" style="left:673px;top:509px;width:101px;overflow:hidden">SelectLinkage_Control</div>
<div class="a" style="left:779px;top:504px;width:70px;height:20px;background:#fff;border-top:1px solid #ACA899;border-left:1px solid #ACA899;border-right:1px solid #fff;border-bottom:1px solid #fff;box-shadow:inset 1px 1px 0 #716F64,inset -1px -1px 0 #F1EFE2"></div>
<div class="a" style="left:832px;top:506px;width:16px;height:17px;background:#ECE9D8;border-top:1px solid #F1EFE2;border-left:1px solid #F1EFE2;border-right:1px solid #716F64;border-bottom:1px solid #716F64;box-shadow:inset -1px -1px 0 #ACA899,inset 1px 1px 0 #fff"></div>
<svg class="a" style="left:837px;top:513px" width="7" height="4" shape-rendering="crispEdges"><path d="M0 0h7v1h-1v1h-1v1h-1v1h-1v-1h-1v-1h-1v-1h-1z" fill="#000"/></svg>
<div class="t d" style="left:782px;top:509px;">Control1</div>
<div class="a" style="left:699px;top:537px;width:140px;height:114px;border:1px solid #fff"></div>
<div class="a" style="left:698px;top:536px;width:140px;height:114px;border:1px solid #B8B5A6"></div>
<div class="t d" style="left:705px;top:532px;padding:0 2px 0 2px;background:#ECE9D8;height:11px">Control1</div>
<svg class="a" style="left:719px;top:545px" width="12" height="12" viewBox="0 0 12 12" shape-rendering="crispEdges"><path d="M4 0h4v1h2v1h1v2h1v4h-1v2h-1v1h-2v1h-4v-1h-2v-1h-1v-2h-1v-4h1v-2h1v-1h2z" fill="#fff"/><path d="M4 0h4v1h-4zM2 1h2v1h-2zM8 1h2v1h-2zM1 2h1v2h-1zM0 4h1v4h-1zM1 8h1v2h-1z" fill="#ACA899"/><path d="M4 1h4v1h-4zM2 2h2v1h-2zM8 2h2v1h-2zM2 3h1v1h-1zM1 4h1v4h-1zM2 8h1v1h-1z" fill="#716F64"/><path d="M10 2h1v2h-1zM11 4h1v4h-1zM10 8h1v2h-1zM8 10h2v1h-2zM2 10h2v1h-2zM4 11h4v1h-4z" fill="#fff"/><path d="M9 3h1v1h-1zM10 4h1v4h-1zM9 8h1v1h-1zM8 9h1v1h-1zM3 9h1v1h-1zM4 10h4v1h-4z" fill="#F1EFE2"/></svg>
<div class="t d" style="left:735px;top:546px;">Always Open</div>
<svg class="a" style="left:719px;top:570px" width="12" height="12" viewBox="0 0 12 12" shape-rendering="crispEdges"><path d="M4 0h4v1h2v1h1v2h1v4h-1v2h-1v1h-2v1h-4v-1h-2v-1h-1v-2h-1v-4h1v-2h1v-1h2z" fill="#fff"/><path d="M4 0h4v1h-4zM2 1h2v1h-2zM8 1h2v1h-2zM1 2h1v2h-1zM0 4h1v4h-1zM1 8h1v2h-1z" fill="#ACA899"/><path d="M4 1h4v1h-4zM2 2h2v1h-2zM8 2h2v1h-2zM2 3h1v1h-1zM1 4h1v4h-1zM2 8h1v1h-1z" fill="#716F64"/><path d="M10 2h1v2h-1zM11 4h1v4h-1zM10 8h1v2h-1zM8 10h2v1h-2zM2 10h2v1h-2zM4 11h4v1h-4z" fill="#fff"/><path d="M9 3h1v1h-1zM10 4h1v4h-1zM9 8h1v1h-1zM8 9h1v1h-1zM3 9h1v1h-1zM4 10h4v1h-4z" fill="#F1EFE2"/></svg>
<div class="t d" style="left:735px;top:572px;">Always Close</div>
<svg class="a" style="left:719px;top:597px" width="12" height="12" viewBox="0 0 12 12" shape-rendering="crispEdges"><path d="M4 0h4v1h2v1h1v2h1v4h-1v2h-1v1h-2v1h-4v-1h-2v-1h-1v-2h-1v-4h1v-2h1v-1h2z" fill="#fff"/><path d="M4 0h4v1h-4zM2 1h2v1h-2zM8 1h2v1h-2zM1 2h1v2h-1zM0 4h1v4h-1zM1 8h1v2h-1z" fill="#ACA899"/><path d="M4 1h4v1h-4zM2 2h2v1h-2zM8 2h2v1h-2zM2 3h1v1h-1zM1 4h1v4h-1zM2 8h1v1h-1z" fill="#716F64"/><path d="M10 2h1v2h-1zM11 4h1v4h-1zM10 8h1v2h-1zM8 10h2v1h-2zM2 10h2v1h-2zM4 11h4v1h-4z" fill="#fff"/><path d="M9 3h1v1h-1zM10 4h1v4h-1zM9 8h1v1h-1zM8 9h1v1h-1zM3 9h1v1h-1zM4 10h4v1h-4z" fill="#F1EFE2"/><path d="M5 4h2v1h1v2h-1v1h-2v-1h-1v-2h1z" fill="#000"/></svg>
<div class="t d" style="left:735px;top:599px;">Auto Open</div>
<svg class="a" style="left:719px;top:622px" width="12" height="12" viewBox="0 0 12 12" shape-rendering="crispEdges"><path d="M4 0h4v1h2v1h1v2h1v4h-1v2h-1v1h-2v1h-4v-1h-2v-1h-1v-2h-1v-4h1v-2h1v-1h2z" fill="#fff"/><path d="M4 0h4v1h-4zM2 1h2v1h-2zM8 1h2v1h-2zM1 2h1v2h-1zM0 4h1v4h-1zM1 8h1v2h-1z" fill="#ACA899"/><path d="M4 1h4v1h-4zM2 2h2v1h-2zM8 2h2v1h-2zM2 3h1v1h-1zM1 4h1v4h-1zM2 8h1v1h-1z" fill="#716F64"/><path d="M10 2h1v2h-1zM11 4h1v4h-1zM10 8h1v2h-1zM8 10h2v1h-2zM2 10h2v1h-2zM4 11h4v1h-4z" fill="#fff"/><path d="M9 3h1v1h-1zM10 4h1v4h-1zM9 8h1v1h-1zM8 9h1v1h-1zM3 9h1v1h-1zM4 10h4v1h-4z" fill="#F1EFE2"/></svg>
<div class="t d" style="left:735px;top:624px;">Auto Close</div>
<div class="a" style="left:287px;top:616px;width:288px;height:23px;background:#ECE9D8;border-top:1px solid #ACA899;border-left:1px solid #ACA899;border-right:1px solid #fff;border-bottom:1px solid #fff;box-shadow:inset 1px 1px 0 #716F64,inset -1px -1px 0 #F1EFE2"></div>
<div class="t d" style="left:290px;top:620px;color:#000">read success</div>
<!--/DLG-->
<div id="pstatus" class="a"></div>
<div class="t" style="left:2px;top:819px">Для получения справки выберите команду "Вызов справки" из меню "Справка".</div>
<div class="a" style="left:912px;top:812px;width:2px;height:21px;border-left:1px solid #D8D4C4;border-right:1px solid #fff"></div>
<div class="a" style="left:1031px;top:812px;width:2px;height:21px;border-left:1px solid #D8D4C4;border-right:1px solid #fff"></div>
<div id="taskbar" class="a"></div>

<!-- taskbar -->
<div class="a" style="left:0;top:834px;width:96px;height:30px;border-radius:0 10px 10px 0;background:linear-gradient(#3C9A3C 0,#5DBB5D 3px,#3FA73F 8px,#379A37 50%,#389F38 85%,#2C7F2C 100%);box-shadow:inset -2px 0 3px #2A6A2A"></div>
<svg class="a" style="left:10px;top:840px" width="20" height="18" viewBox="0 0 20 18" shape-rendering="auto">
 <path d="M2 3 Q5 1 9 3 L8 8 Q5 6 1 8 Z" fill="#F05A28"/>
 <path d="M11 3 Q14 5 18 3 L17 8 Q13 10 10 8 Z" fill="#7CBB00"/>
 <path d="M1 9.5 Q5 7.5 8 9.5 L7 15 Q4 13 0 15 Z" fill="#00A1F1"/>
 <path d="M10 9.5 Q13 11.5 17 9.5 L16 15 Q12 17 9 15 Z" fill="#FFBB00"/>
</svg>
<div class="t" style="left:35px;top:841px;font-size:17px;font-weight:bold;font-style:italic;color:#fff;text-shadow:1px 1px 1px #1F5A1F">пуск</div>
<!-- quick launch -->
<svg class="a" style="left:104px;top:839px" width="70" height="20" viewBox="0 0 70 20" shape-rendering="auto">
 <path d="M4 16 Q1 19 3 13 Q6 5 14 3 Q19 2 18 5" fill="none" stroke="#5AA8F0" stroke-width="1.4"/>
 <path d="M11.5 4.5 a6 5.8 0 1 0 5.5 8 h-3 a3.2 3 0 0 1 -5.5 -1.5 h8.6 a6 5.8 0 0 0 -5.6 -6.5 z M8.6 8.8 a3 2.6 0 0 1 5.8 0 z" fill="#48A0F0" fill-rule="evenodd"/>
 <circle cx="33.5" cy="10" r="7" fill="#F4F4F4"/>
 <path d="M33.5 3 A7 7 0 0 0 26.5 10 L29.5 10 A4 4 0 0 1 33.5 6 Z" fill="#E84A30"/>
 <path d="M33.5 3 A7 7 0 0 1 40.5 10 L37.5 10 A4 4 0 0 0 33.5 6 Z" fill="#48A830"/>
 <path d="M40.5 10 A7 7 0 0 1 33.5 17 L33.5 14 A4 4 0 0 0 37.5 10 Z" fill="#E8C020"/>
 <path d="M31 6.5 L37 10 L31 13.5 Z" fill="#101010"/>
 <path d="M60 4 Q55 2 52 6 Q50 10 52 14 Q55 18 60 16 L61 12 L57 13 L56 7 L61 8 Z" fill="#F0F8FF" stroke="#183A90" stroke-width="1.2"/>
 <path d="M55 10 L63 7" stroke="#183A90" stroke-width="1.2"/>
</svg>
<!-- task buttons -->
<div class="a tbtn" style="left:181px;top:838px;width:158px"></div>
<svg class="a" style="left:190px;top:841px" width="16" height="16" shape-rendering="crispEdges">
 <rect x="0" y="0" width="16" height="16" fill="#F8F8F8" stroke="#A0B8E0"/>
 <path d="M3 4 L12 3 L13 11 L8 13 L3 12 Z" fill="#E8E8E8" stroke="#909090" stroke-width="0.6"/>
 <rect x="2" y="9" width="5" height="4" fill="#404040"/>
</svg>
<div class="t tbt" style="left:210px;top:844px">CorelDRAW 12 - [Gra...</div>
<div class="a tbtn tbact" style="left:340px;top:838px;width:159px"></div>
<svg class="a" style="left:351px;top:842px" width="16" height="16" viewBox="0 0 16 16" shape-rendering="crispEdges">
 <defs><linearGradient id="mg2" x1="0" y1="0" x2="0" y2="1"><stop offset="0" stop-color="#1212C8"/><stop offset="0.55" stop-color="#140A70"/><stop offset="1" stop-color="#0A0020"/></linearGradient></defs>
 <rect width="16" height="16" fill="url(#mg2)"/>
 <rect x="7" y="4" width="2" height="9" fill="#B01050"/>
 <rect x="8" y="12" width="1" height="3" fill="#C07020"/>
 <rect x="5" y="4" width="2" height="1" fill="#E0B060"/><rect x="6" y="5" width="2" height="1" fill="#E0C070"/>
 <rect x="0" y="10" width="2" height="5" fill="#A020C0"/>
 <path d="M5 2h6v1h-6zM7 1h2v3h-2z" fill="#fff"/>
 <path d="M1 9h6v1h-6zM3 8h2v3h-2z" fill="#fff"/>
 <path d="M9 9h6v1h-6zM11 8h2v3h-2z" fill="#fff"/>
 <path d="M0 15h2v1h-2zM6 15h4v1h-4zM14 15h2v1h-2z" fill="#fff"/>
</svg>
<div class="t tbt" style="left:371px;top:844px">_MachineSetting_</div>
<div class="a tbtn" style="left:501px;top:838px;width:158px"></div>
<svg class="a" style="left:510px;top:840px" width="17" height="19" viewBox="0 0 17 19" shape-rendering="auto">
 <path d="M3 3 L5 10" stroke="#B86040" stroke-width="1.6"/>
 <path d="M7.5 4 L8 10" stroke="#E0A050" stroke-width="1.6"/>
 <path d="M11.5 4 L10.5 10" stroke="#C86040" stroke-width="1.6"/>
 <path d="M4.5 9 L13.5 9 L12.5 18.5 L5.5 18.5 Z" fill="#C8C890" stroke="#404050" stroke-width="0.9" opacity="0.9"/>
 <path d="M5.5 10 L8 10 L8 17.5 L6.2 17.5 Z" fill="#90C070" opacity="0.8"/>
 <path d="M8 10 L12.5 10 L11.8 17.5 L8 17.5 Z" fill="#E0B060" opacity="0.8"/>
</svg>
<div class="t tbt" style="left:530px;top:844px">Безымянный - Paint</div>
<div class="t" style="left:1015px;top:844px;color:#fff">RL</div>
<!-- tray -->
<div class="a" style="left:1041px;top:834px;width:111px;height:30px;background:linear-gradient(#1A8FE8 0,#18A0F0 2px,#0E95EA 6px,#0F8EE6 50%,#1196EA 90%,#0A70C8 100%);border-left:1px solid #0F50B0;box-shadow:inset 1px 0 0 #47B4F6"></div>
<svg class="a" style="left:1052px;top:840px" width="55" height="18" viewBox="0 0 55 18" shape-rendering="auto">
 <path d="M1 2 Q7 0 13 2 L13 9 Q12 14 7 17 Q2 14 1 9 Z" fill="#C81828" stroke="#801010" stroke-width="0.6"/>
 <circle cx="7" cy="8.5" r="3.2" fill="#fff"/>
 <path d="M5.5 7 L8.5 10 M8.5 7 L5.5 10" stroke="#D01010" stroke-width="1.2"/>
 <rect x="19" y="4" width="6" height="8" fill="#5060A0" stroke="#202050" stroke-width="0.6"/>
 <rect x="24" y="1" width="7" height="9" fill="#4050A0" stroke="#202050" stroke-width="0.6"/>
 <rect x="18" y="12" width="9" height="2" fill="#C0C8E0"/>
 <path d="M27 9 L33 16 M33 9 L27 16" stroke="#E02010" stroke-width="1.8"/>
 <path d="M38 2 L52 4 L50 12 L38 11 Z" fill="#fff" stroke="#101010" stroke-width="1"/>
 <path d="M39.5 3.5 L44 4 L43.5 7 L39.5 6.5 Z" fill="#E020D0"/>
 <path d="M44 4 L50.5 5 L50 8 L43.5 7 Z" fill="#20C020"/>
 <path d="M39.5 6.5 L43.5 7 L43 10 L39.5 9.5 Z" fill="#F0E000"/>
 <path d="M43.5 7 L50 8 L49.5 11 L43 10 Z" fill="#2040E0"/>
 <path d="M42 13 L48 13 L49 16 L40 16 Z" fill="#fff" stroke="#101010" stroke-width="1"/>
</svg>
<div class="t" style="left:1111px;top:844px;color:#fff">16:08</div>


</body></html>
